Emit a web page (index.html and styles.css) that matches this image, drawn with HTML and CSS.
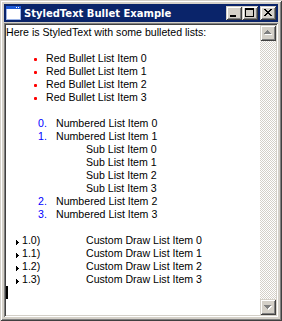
FILE: index.html
```html
<!DOCTYPE html>
<html>
<head>
<meta charset="utf-8">
<title>StyledText Bullet Example</title>
<link rel="stylesheet" href="styles.css">
</head>
<body>
<div class="window">
  <div class="titlebar">
    <svg class="app-icon" width="16" height="16" viewBox="0 0 16 16" shape-rendering="crispEdges">
      <rect x="1" y="1" width="15" height="14" fill="#ffffff"/>
      <rect x="1" y="1" width="15" height="3" fill="#1e5ad6"/>
      <rect x="11" y="2" width="1" height="1" fill="#ffffff"/>
      <rect x="13" y="2" width="1" height="1" fill="#ffffff"/>
      <rect x="1" y="4" width="1" height="11" fill="#9cb4e6"/>
      <rect x="15" y="4" width="1" height="11" fill="#9cb4e6"/>
      <rect x="1" y="14" width="15" height="1" fill="#9cb4e6"/>
    </svg>
    <span class="title">StyledText Bullet Example</span>
    <div class="caption-buttons">
      <div class="cbtn">
        <svg width="16" height="14" viewBox="0 0 16 14" shape-rendering="crispEdges"><rect x="4" y="9" width="6" height="2" fill="#000"/></svg>
      </div>
      <div class="cbtn">
        <svg width="16" height="14" viewBox="0 0 16 14" shape-rendering="crispEdges"><rect x="3" y="2" width="9" height="2" fill="#000"/><rect x="3" y="4" width="1" height="7" fill="#000"/><rect x="11" y="4" width="1" height="7" fill="#000"/><rect x="3" y="10" width="9" height="1" fill="#000"/></svg>
      </div>
      <div class="cbtn close">
        <svg width="16" height="14" viewBox="0 0 16 14" shape-rendering="crispEdges">
          <rect x="4" y="3" width="2" height="1" fill="#000"/><rect x="10" y="3" width="2" height="1" fill="#000"/>
          <rect x="5" y="4" width="2" height="1" fill="#000"/><rect x="9" y="4" width="2" height="1" fill="#000"/>
          <rect x="6" y="5" width="4" height="1" fill="#000"/>
          <rect x="7" y="6" width="2" height="1" fill="#000"/>
          <rect x="6" y="7" width="4" height="1" fill="#000"/>
          <rect x="5" y="8" width="2" height="1" fill="#000"/><rect x="9" y="8" width="2" height="1" fill="#000"/>
          <rect x="4" y="9" width="2" height="1" fill="#000"/><rect x="10" y="9" width="2" height="1" fill="#000"/>
        </svg>
      </div>
    </div>
  </div>
  <div class="client">
    <div class="doc">
      <div class="line">Here is StyledText with some bulleted lists:</div>
      <div class="line"></div>
      <div class="line bullet"><span class="mark"><span class="dot"></span></span><span>Red Bullet List Item 0</span></div>
      <div class="line bullet"><span class="mark"><span class="dot"></span></span><span>Red Bullet List Item 1</span></div>
      <div class="line bullet"><span class="mark"><span class="dot"></span></span><span>Red Bullet List Item 2</span></div>
      <div class="line bullet"><span class="mark"><span class="dot"></span></span><span>Red Bullet List Item 3</span></div>
      <div class="line"></div>
      <div class="line numbered"><span class="num">0.</span><span>Numbered List Item 0</span></div>
      <div class="line numbered"><span class="num">1.</span><span>Numbered List Item 1</span></div>
      <div class="line sub"><span>Sub List Item 0</span></div>
      <div class="line sub"><span>Sub List Item 1</span></div>
      <div class="line sub"><span>Sub List Item 2</span></div>
      <div class="line sub"><span>Sub List Item 3</span></div>
      <div class="line numbered"><span class="num">2.</span><span>Numbered List Item 2</span></div>
      <div class="line numbered"><span class="num">3.</span><span>Numbered List Item 3</span></div>
      <div class="line"></div>
      <div class="line custom"><span class="tri"><svg width="3" height="5" viewBox="0 0 3 5" shape-rendering="crispEdges"><rect x="0" y="0" width="1" height="5" fill="#000"/><rect x="1" y="1" width="1" height="3" fill="#000"/><rect x="2" y="2" width="1" height="1" fill="#000"/></svg></span><span class="cnum">1.0)</span><span>Custom Draw List Item 0</span></div>
      <div class="line custom"><span class="tri"><svg width="3" height="5" viewBox="0 0 3 5" shape-rendering="crispEdges"><rect x="0" y="0" width="1" height="5" fill="#000"/><rect x="1" y="1" width="1" height="3" fill="#000"/><rect x="2" y="2" width="1" height="1" fill="#000"/></svg></span><span class="cnum">1.1)</span><span>Custom Draw List Item 1</span></div>
      <div class="line custom"><span class="tri"><svg width="3" height="5" viewBox="0 0 3 5" shape-rendering="crispEdges"><rect x="0" y="0" width="1" height="5" fill="#000"/><rect x="1" y="1" width="1" height="3" fill="#000"/><rect x="2" y="2" width="1" height="1" fill="#000"/></svg></span><span class="cnum">1.2)</span><span>Custom Draw List Item 2</span></div>
      <div class="line custom"><span class="tri"><svg width="3" height="5" viewBox="0 0 3 5" shape-rendering="crispEdges"><rect x="0" y="0" width="1" height="5" fill="#000"/><rect x="1" y="1" width="1" height="3" fill="#000"/><rect x="2" y="2" width="1" height="1" fill="#000"/></svg></span><span class="cnum">1.3)</span><span>Custom Draw List Item 3</span></div>
      <div class="line"><span class="caret"></span></div>
    </div>
    <div class="vscroll">
      <div class="sbtn">
        <svg width="16" height="16" viewBox="0 0 16 16" shape-rendering="crispEdges">
          <g fill="#ffffff" transform="translate(1,1)">
            <rect x="7" y="5" width="1" height="1"/><rect x="6" y="6" width="3" height="1"/><rect x="5" y="7" width="5" height="1"/><rect x="4" y="8" width="7" height="1"/>
          </g>
          <g fill="#808080">
            <rect x="7" y="5" width="1" height="1"/><rect x="6" y="6" width="3" height="1"/><rect x="5" y="7" width="5" height="1"/><rect x="4" y="8" width="7" height="1"/>
          </g>
        </svg>
      </div>
      <div class="track"></div>
      <div class="sbtn">
        <svg width="16" height="16" viewBox="0 0 16 16" shape-rendering="crispEdges">
          <g fill="#ffffff" transform="translate(1,1)">
            <rect x="4" y="6" width="7" height="1"/><rect x="5" y="7" width="5" height="1"/><rect x="6" y="8" width="3" height="1"/><rect x="7" y="9" width="1" height="1"/>
          </g>
          <g fill="#808080">
            <rect x="4" y="6" width="7" height="1"/><rect x="5" y="7" width="5" height="1"/><rect x="6" y="8" width="3" height="1"/><rect x="7" y="9" width="1" height="1"/>
          </g>
        </svg>
      </div>
    </div>
  </div>
</div>
</body>
</html>
```

FILE: styles.css
```css
* {
  box-sizing: border-box;
}

html,
body {
  margin: 0;
  padding: 0;
  background: #d4d0c8;
}

body {
  width: 282px;
  height: 321px;
  overflow: hidden;
  font-family: "Liberation Sans", Arial, sans-serif;
  font-size: 10.6px;
  color: #000;
}

.window {
  width: 282px;
  height: 321px;
  padding: 4px;
  background: #d4d0c8;
  display: flex;
  flex-direction: column;
  box-shadow: inset 1px 1px #d4d0c8, inset -1px -1px #404040,
    inset 2px 2px #ffffff, inset -2px -2px #808080;
}

.titlebar {
  flex: none;
  height: 18px;
  background: #0a246a;
  color: #fff;
  display: flex;
  align-items: center;
  padding: 0 2px 0 1px;
}

.app-icon {
  flex: none;
  display: block;
  margin-right: 3px;
}

.title {
  flex: 1;
  font-family: "DejaVu Sans", Verdana, sans-serif;
  font-weight: bold;
  font-size: 10px;
  white-space: nowrap;
  overflow: hidden;
}

.caption-buttons {
  display: flex;
  flex: none;
}

.cbtn {
  width: 16px;
  height: 14px;
  background: #d4d0c8;
  box-shadow: inset 1px 1px #d4d0c8, inset -1px -1px #404040,
    inset 2px 2px #ffffff, inset -2px -2px #808080;
}

.cbtn svg {
  display: block;
}

.cbtn.close {
  margin-left: 2px;
}

.client {
  flex: 1;
  margin-top: 1px;
  padding: 2px;
  display: flex;
  min-height: 0;
  box-shadow: inset 1px 1px #808080, inset -1px -1px #ffffff,
    inset 2px 2px #404040, inset -2px -2px #d4d0c8;
}

.doc {
  flex: 1;
  background: #fff;
  padding-top: 1px;
  overflow: hidden;
}

.line {
  height: 13px;
  line-height: 13px;
  white-space: nowrap;
  display: flex;
  align-items: center;
}

.bullet {
  padding-left: 28px;
}

.mark {
  flex: none;
  width: 12px;
  display: flex;
  align-items: center;
  height: 13px;
}

.dot {
  width: 3px;
  height: 3px;
  background: #ff0000;
  border-radius: 1px;
  margin-top: 1px;
}

.numbered {
  padding-left: 32px;
}

.num {
  flex: none;
  width: 18px;
  color: #0000ff;
}

.sub {
  padding-left: 80px;
}

.custom {
  padding-left: 10px;
}

.tri {
  flex: none;
  width: 6px;
  height: 13px;
  display: flex;
  align-items: center;
  padding-top: 3px;
}

.tri svg {
  display: block;
}

.cnum {
  flex: none;
  width: 64px;
}

.caret {
  width: 2px;
  height: 13px;
  background: #000;
}

.vscroll {
  flex: none;
  width: 16px;
  display: flex;
  flex-direction: column;
}

.sbtn {
  flex: none;
  width: 16px;
  height: 16px;
  background: #d4d0c8;
  box-shadow: inset 1px 1px #d4d0c8, inset -1px -1px #404040,
    inset 2px 2px #ffffff, inset -2px -2px #808080;
}

.sbtn svg {
  display: block;
}

.track {
  flex: 1;
  background: repeating-conic-gradient(#d4d0c8 0 25%, #ffffff 0 50%) 0 0 / 2px 2px;
}
```
